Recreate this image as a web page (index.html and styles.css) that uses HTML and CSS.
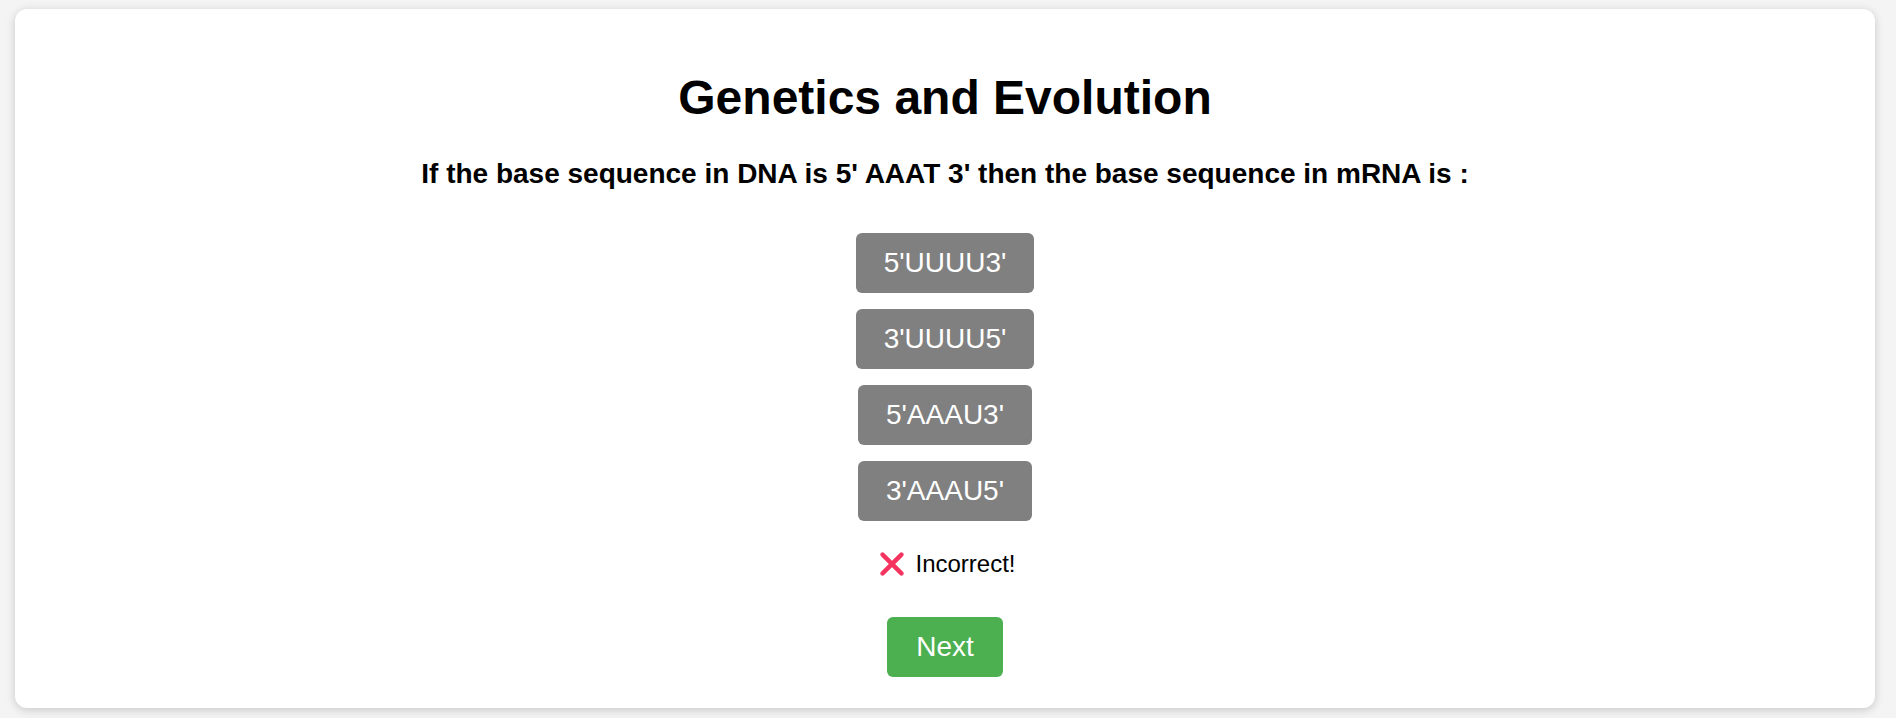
FILE: index.html
```html
<!DOCTYPE html>
<html lang="en">
<head>
<meta charset="utf-8">
<title>Genetics and Evolution</title>
<link rel="stylesheet" href="styles.css">
</head>
<body>
<div class="card">
  <h1 class="title">Genetics and Evolution</h1>
  <p class="question">If the base sequence in DNA is 5' AAAT 3' then the base sequence in mRNA is :</p>
  <div class="options">
    <button class="option">5'UUUU3'</button>
    <button class="option">3'UUUU5'</button>
    <button class="option">5'AAAU3'</button>
    <button class="option">3'AAAU5'</button>
  </div>
  <div class="feedback">
    <svg class="x-icon" width="24" height="24" viewBox="0 0 24 24" aria-hidden="true">
      <path d="M2.6 2.6 L21.4 21.4 M21.4 2.6 L2.6 21.4" stroke="#f4335f" stroke-width="4.4" stroke-linecap="round" fill="none"/>
    </svg>
    <span class="feedback-text">Incorrect!</span>
  </div>
  <button class="next">Next</button>
</div>
</body>
</html>
```

FILE: styles.css
```css
html, body {
  margin: 0;
  padding: 0;
}
body {
  background: #f4f4f4;
  font-family: "Liberation Sans", Arial, sans-serif;
  padding: 9px 21px 10px 15px;
}
.card {
  background: #ffffff;
  border-radius: 12px;
  box-shadow: 0 2px 10px rgba(0, 0, 0, 0.18);
  padding: 61px 20px 31px;
  display: flex;
  flex-direction: column;
  align-items: center;
}
.title {
  margin: 0;
  font-size: 48px;
  line-height: 56px;
  font-weight: bold;
  color: #000;
}
.question {
  margin: 32px 0 0;
  font-size: 28px;
  line-height: 32px;
  font-weight: bold;
  color: #000;
}
.options {
  margin-top: 43px;
  display: flex;
  flex-direction: column;
  align-items: center;
  gap: 16px;
}
.option, .next {
  border: none;
  border-radius: 6px;
  color: #ffffff;
  font-family: "Liberation Sans", Arial, sans-serif;
  font-size: 28px;
  line-height: 32px;
  padding: 14px 28px;
  cursor: pointer;
}
.option {
  background: #808080;
}
.feedback {
  margin-top: 29px;
  margin-left: 6px;
  display: flex;
  align-items: center;
  gap: 11px;
}
.x-icon {
  display: block;
}
.feedback-text {
  font-size: 24px;
  line-height: 28px;
  color: #000;
}
.next {
  margin-top: 39px;
  background: #4caf50;
  padding: 14px 29px;
}
```
